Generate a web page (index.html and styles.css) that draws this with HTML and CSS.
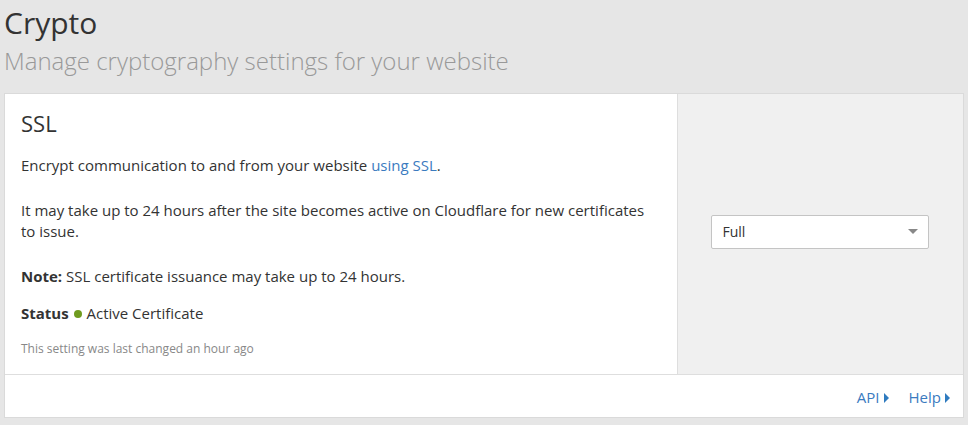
FILE: index.html
```html
<!DOCTYPE html>
<html lang="en">
<head>
<meta charset="utf-8">
<title>Crypto</title>
<link rel="stylesheet" href="styles.css">
</head>
<body>
<div class="page">
  <header class="page-header">
    <h1 class="page-title">Crypto</h1>
    <p class="page-subtitle">Manage cryptography settings for your website</p>
  </header>
  <section class="card">
    <div class="card-body">
      <div class="card-main">
        <h2 class="card-title">SSL</h2>
        <p class="text">Encrypt communication to and from your website <a class="link" href="#">using SSL</a>.</p>
        <p class="text">It may take up to 24 hours after the site becomes active on Cloudflare for new certificates to issue.</p>
        <p class="text note"><strong>Note:</strong> SSL certificate issuance may take up to 24 hours.</p>
        <p class="text status"><strong>Status</strong> <span class="dot"></span> Active Certificate</p>
        <p class="changed">This setting was last changed an hour ago</p>
      </div>
      <div class="card-side">
        <div class="select">
          <span class="select-value">Full</span>
          <span class="select-arrow"></span>
        </div>
      </div>
    </div>
    <footer class="card-footer">
      <a class="footer-link" href="#">API <span class="tri"></span></a>
      <a class="footer-link" href="#">Help <span class="tri"></span></a>
    </footer>
  </section>
</div>
</body>
</html>
```
FILE: styles.css
```css
html, body {
  margin: 0;
  padding: 0;
  background: #e6e6e6;
}
body {
  font-family: "Open Sans", "Liberation Sans", sans-serif;
  color: #333;
}
.page {
  padding: 5px 4px 0 4px;
}
.page-title {
  margin: 0;
  font-size: 30px;
  line-height: 36px;
  font-weight: 400;
  color: #333;
}
.page-subtitle {
  margin: 5px 0 0 0;
  font-size: 24px;
  line-height: 30px;
  font-weight: 300;
  color: #999;
}
.card {
  margin-top: 17px;
  background: #fff;
  border: 1px solid #dadada;
}
.card-body {
  display: grid;
  grid-template-columns: 1fr 286px;
  border-bottom: 1px solid #dedede;
}
.card-main {
  padding: 16px 16px 16px 16px;
}
.card-title {
  margin: 0 0 19px 0;
  font-size: 22px;
  line-height: 26px;
  font-weight: 400;
  color: #333;
}
.text {
  margin: 0 0 24px 0;
  font-size: 15px;
  line-height: 21px;
}
.text.note {
  margin-bottom: 16px;
}
.text.status {
  margin-bottom: 16px;
}
.text strong {
  font-weight: 700;
}
.link {
  color: #3b7bbf;
  text-decoration: none;
}
.dot {
  display: inline-block;
  width: 8px;
  height: 8px;
  border-radius: 50%;
  background: #6f9b1f;
  vertical-align: 1px;
  margin: 0 1px;
}
.changed {
  margin: 0;
  font-size: 12px;
  line-height: 18px;
  color: #888;
}
.card-side {
  background: #f0f0f0;
  border-left: 1px solid #dedede;
  display: flex;
  align-items: center;
  justify-content: center;
  padding-bottom: 5px;
}
.select {
  height: 32px;
  border: 1px solid #c4c4c4;
  border-radius: 2px;
  background: #fff;
  display: flex;
  align-items: center;
  justify-content: space-between;
  padding: 0 10px 0 11px;
  box-sizing: content-box;
  width: 195px;
  margin-right: 2px;
}
.select-value {
  font-size: 14px;
  color: #333;
}
.select-arrow {
  width: 0;
  height: 0;
  border-left: 5px solid transparent;
  border-right: 5px solid transparent;
  border-top: 5px solid #888;
}
.card-footer {
  display: flex;
  justify-content: flex-end;
  gap: 20px;
  padding: 12px 13px 9px 0;
}
.footer-link {
  font-size: 15px;
  line-height: 21px;
  color: #3b7bbf;
  text-decoration: none;
  display: flex;
  align-items: center;
  gap: 4px;
}
.tri {
  width: 0;
  height: 0;
  border-top: 5px solid transparent;
  border-bottom: 5px solid transparent;
  border-left: 5px solid #2f7bbf;
  margin-top: 1px;
}
```
